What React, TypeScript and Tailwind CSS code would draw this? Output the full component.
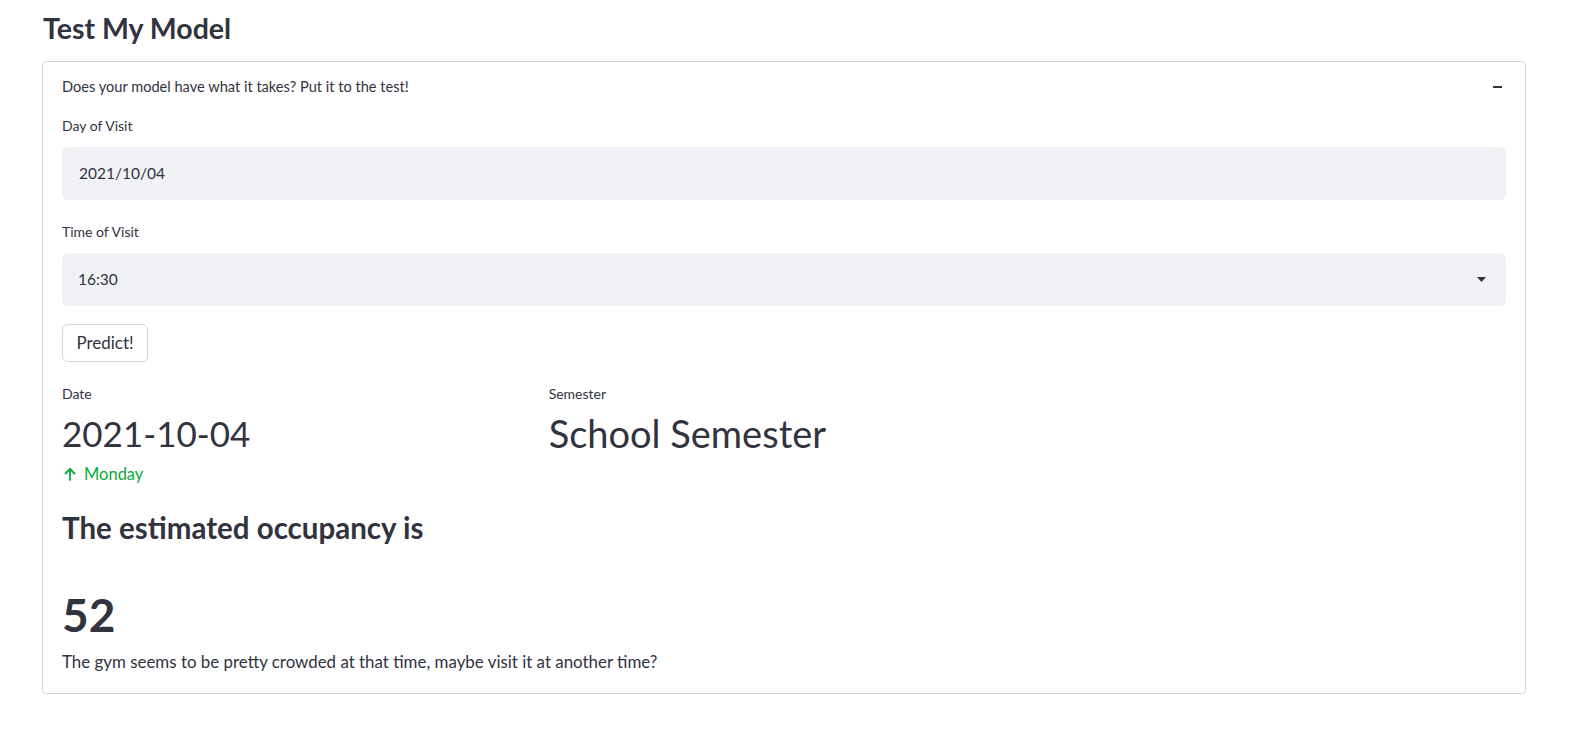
const INK = "text-[#31333f]";

function Label({ children }: { children: React.ReactNode }) {
  return <div className="text-[14px] leading-[20px]">{children}</div>;
}

function Metric({ label, value, delta, size }: { label: string; value: string; delta?: string; size: string }) {
  return (
    <div className="flex flex-col">
      <Label>{label}</Label>
      <div className={`mt-[7px] leading-[44px] ${size}`}>{value}</div>
      {delta && (
        <div className="mt-[9px] flex items-center gap-[6px] text-[16.5px] leading-[20px] text-[#09ab3b]">
          <svg width="16" height="16" viewBox="0 0 16 16" fill="none" stroke="currentColor" strokeWidth="1.8" strokeLinecap="round" strokeLinejoin="round">
            <path d="M8 14V3" />
            <path d="M3.5 7.5L8 3l4.5 4.5" />
          </svg>
          <span>{delta}</span>
        </div>
      )}
    </div>
  );
}

export default function App() {
  return (
    <div className={`min-h-screen bg-white ${INK} font-['Lato','Open_Sans',sans-serif]`}>
      <div className="ml-[42px] w-[1484px]">
        <h2 className="pt-[10px] pl-[1px] text-[28.5px] font-bold leading-[36px]">Test My Model</h2>

        <div className="mt-[15px] rounded-[4px] border border-[#d6d6d9]">
          {/* expander header */}
          <div className="flex h-[50px] items-center justify-between pl-[19px] pr-[23px]">
            <span className="text-[14.6px]">Does your model have what it takes? Put it to the test!</span>
            <span className="block h-[2px] w-[9px] bg-[#31333f]" />
          </div>

          <div className="flex flex-col px-[19px] pt-[4px] pb-[19px]">
            <Label>Day of Visit</Label>
            <div className="mt-[11px] flex h-[53px] items-center rounded-[6px] bg-[#f0f2f6] pl-[17px] text-[15.5px]">
              2021/10/04
            </div>

            <div className="mt-[22px]">
              <Label>Time of Visit</Label>
            </div>
            <div className="mt-[11px] flex h-[53px] items-center justify-between rounded-[6px] bg-[#f0f2f6] pl-[16px] pr-[20px] text-[15.5px]">
              <span>16:30</span>
              <svg width="9" height="5" viewBox="0 0 9 5" className="text-[#31333f]">
                <path d="M0 0h9L4.5 5z" fill="currentColor" />
              </svg>
            </div>

            <div className="mt-[18px]">
              <button className="h-[38px] w-[86px] rounded-[6px] border border-[#d6d6d9] bg-white text-[17px]">
                Predict!
              </button>
            </div>

            <div className="mt-[22px] grid grid-cols-3 gap-4">
              <Metric label="Date" value="2021-10-04" delta="Monday" size="text-[35px]" />
              <Metric label="Semester" value="School Semester" size="text-[38px]" />
              <div />
            </div>

            <h3 className="mt-[26px] text-[29.5px] font-bold leading-[36px]">The estimated occupancy is</h3>

            <div className="mt-[45px] text-[46px] font-bold leading-[48px]">52</div>

            <p className="mt-[11px] text-[16.9px] leading-[24px]">
              The gym seems to be pretty crowded at that time, maybe visit it at another time?
            </p>
          </div>
        </div>
      </div>
    </div>
  );
}
